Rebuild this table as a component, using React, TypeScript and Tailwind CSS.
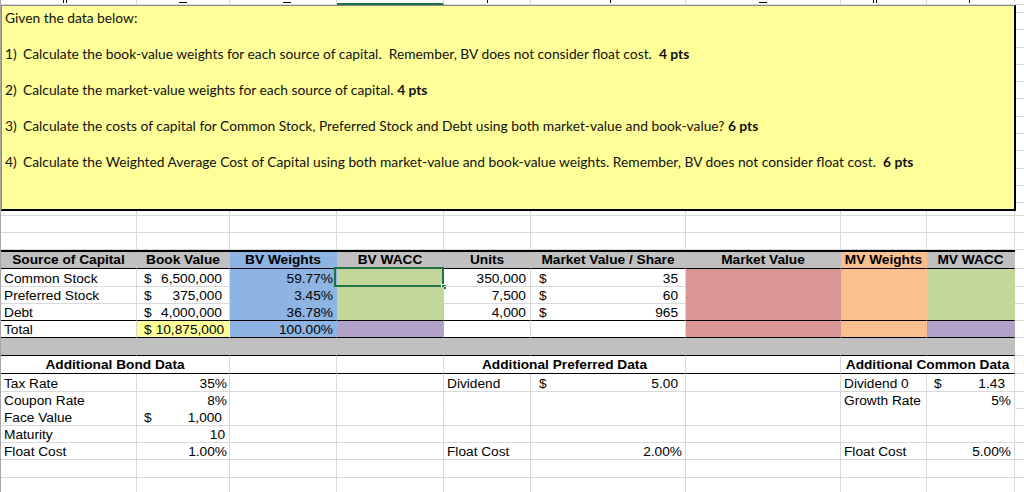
import type { ReactNode } from 'react'

// column grid A..I, widths measured from the sheet
const COLS = 'grid grid-cols-[136px_93px_107px_107px_87px_155px_155px_86px_88px]'

type Cell = { t?: ReactNode; cls?: string; fill?: string; span?: string; sel?: boolean }

const GRID = 'border-[#d9d9d9]'

function Row({
  h,
  cells,
  bottom = 'grid',
  top,
}: {
  h: string
  cells: Cell[]
  bottom?: 'grid' | 'black' | 'none'
  top?: boolean
}) {
  return (
    <div className={`flex ${h}`}>
      <div className={`${COLS} w-[1014px] ${top ? 'border-t-2 border-t-black' : ''}`}>
        {cells.map((c, i) => (
          <div
            key={i}
            className={`relative flex items-end pb-0 border-r border-b px-[3px] whitespace-nowrap ${c.fill ?? GRID} ${
              bottom === 'black' ? 'border-b-black' : bottom === 'none' ? 'border-b-transparent' : ''
            } ${c.span ?? ''} ${c.cls ?? ''}`}
          >
            {c.t}
            {c.sel && (
              <>
                <div className="absolute left-[-3px] top-[-2px] right-[-1px] bottom-[-1px] border-2 border-[#217346]" />
                <div className="absolute right-[-4px] bottom-[-4px] w-[6px] h-[6px] bg-[#217346] border border-white" />
              </>
            )}
          </div>
        ))}
      </div>
      <div className={`flex-1 border-b ${GRID}`} />
    </div>
  )
}

// accounting format: "$" hugs the left, number the right
const money = (n: string, pad = 'pl-[4px] pr-[4px]') => (
  <span className={`flex w-full justify-between gap-[4px] ${pad}`}>
    <span>$</span>
    <span>{n}</span>
  </span>
)

const BLUE = 'bg-[#8db4e2] border-[#8db4e2]'
const GREEN = 'bg-[#c4d79b] border-[#c4d79b]'
const PURPLE = 'bg-[#b1a0c7] border-[#b1a0c7]'
const RED = 'bg-[#da9694] border-[#da9694]'
const ORANGE = 'bg-[#fabf8f] border-[#fabf8f]'
const GRAY = 'bg-[#c0c0c0] border-[#c0c0c0]'
const YELLOW = 'bg-[#ffff99] border-[#ffff99]'

const blank = (n: number): Cell[] => Array.from({ length: n }, () => ({}))

const R = 'justify-end'
const C = 'justify-center font-bold pb-[1px]'
const FMV = 'pl-[5px] pr-[4px]'

export default function App() {
  return (
    <div className="w-[1024px] h-[492px] overflow-hidden bg-white text-black border-l border-[#a6a6a6] font-['Liberation_Sans',Arial,sans-serif] text-[13.7px] leading-none">
      {/* clipped row above the text box */}
      <div className="flex h-[5px]">
        <div className={`${COLS} w-[1014px]`}>
          <div className={`border-r border-b ${GRID} pl-[62px]`}><div className="w-[4px] h-[3px] border-x border-black" /></div>
          <div className={`border-r border-b ${GRID} pl-[42px] flex items-end pb-[1px]`}><div className="w-[8px] h-[1px] bg-black" /></div>
          <div className={`border-r border-b ${GRID} pl-[53px] flex items-end pb-[1px]`}><div className="w-[8px] h-[1px] bg-black" /></div>
          <div className={`border-r ${GRID} border-b-2 border-b-[#217346]`} />
          <div className={`border-r border-b ${GRID} pl-[43px]`}><div className="w-[1px] h-[3px] bg-black" /></div>
          <div className={`border-r border-b ${GRID} pl-[79px]`}><div className="w-[1px] h-[3px] bg-black" /></div>
          <div className={`border-r border-b ${GRID} pl-[73px] flex items-end pb-[1px]`}><div className="w-[8px] h-[1px] bg-black" /></div>
          <div className={`border-r border-b ${GRID} pl-[32px]`}><div className="w-[4px] h-[3px] border-x border-black" /></div>
          <div className={`border-r border-b ${GRID} pl-[42px]`}><div className="w-[1px] h-[3px] bg-black" /></div>
        </div>
        <div className={`flex-1 border-b ${GRID}`} />
      </div>

      {/* instructions text box */}
      <div className="flex h-[206px]">
        <div className="w-[1015px] bg-[#ffff99] border-t border-l border-[#8a8a8a] border-r-2 border-b-2 border-r-black border-b-black pt-[3px] pl-[3px] font-['Lato','Open_Sans',sans-serif] text-[13.8px] leading-[18px] whitespace-pre text-[#111]">
          <p className="mb-[18px]">Given the data below:</p>
          <p className="mb-[18px]">
            <span className="inline-block w-[18px]">1)</span>Calculate the book-value weights for each source of capital.  Remember, BV does not consider float cost.  <b>4 pts</b>
          </p>
          <p className="mb-[18px]">
            <span className="inline-block w-[18px]">2)</span>Calculate the market-value weights for each source of capital. <b>4 pts</b>
          </p>
          <p className="mb-[18px]">
            <span className="inline-block w-[18px]">3)</span>Calculate the costs of capital for Common Stock, Preferred Stock and Debt using both market-value and book-value? <b>6 pts</b>
          </p>
          <p>
            <span className="inline-block w-[18px]">4)</span>Calculate the Weighted Average Cost of Capital using both market-value and book-value weights. Remember, BV does not consider float cost.  <b>6 pts</b>
          </p>
        </div>
        <div className="flex-1 flex flex-col">
          {Array.from({ length: 12 }, (_, i) => (
            <div key={i} className={`h-[17.3px] border-b ${GRID} first:h-[8px]`} />
          ))}
        </div>
      </div>

      <Row h="h-[5px]" cells={blank(9)} />
      <Row h="h-[17px]" cells={blank(9)} />
      <Row h="h-[17px]" cells={blank(9)} />

      {/* capital table */}
      <Row
        h="h-[19px]"
        top
        bottom="black"
        cells={[
          { t: 'Source of Capital', cls: C, fill: GRAY },
          { t: 'Book Value', cls: C, fill: GRAY },
          { t: 'BV Weights', cls: C, fill: BLUE },
          { t: 'BV WACC', cls: C, fill: GRAY },
          { t: 'Units', cls: C, fill: GRAY },
          { t: 'Market Value / Share', cls: C, fill: GRAY },
          { t: 'Market Value', cls: C, fill: GRAY },
          { t: 'MV Weights', cls: C, fill: ORANGE },
          { t: 'MV WACC', cls: C, fill: GRAY },
        ]}
      />
      <Row
        h="h-[18px]"
        cells={[
          { t: 'Common Stock' },
          { t: money('6,500,000') },
          { t: '59.77%', cls: R, fill: BLUE },
          { fill: GREEN, sel: true },
          { t: '350,000', cls: 'justify-end pr-[4px]' },
          { t: money('35', FMV) },
          { fill: RED },
          { fill: ORANGE },
          { fill: GREEN },
        ]}
      />
      <Row
        h="h-[17px]"
        cells={[
          { t: 'Preferred Stock' },
          { t: money('375,000') },
          { t: '3.45%', cls: R, fill: BLUE },
          { fill: GREEN },
          { t: '7,500', cls: 'justify-end pr-[4px]' },
          { t: money('60', FMV) },
          { fill: RED },
          { fill: ORANGE },
          { fill: GREEN },
        ]}
      />
      <Row
        h="h-[17px]"
        bottom="black"
        cells={[
          { t: 'Debt' },
          { t: money('4,000,000') },
          { t: '36.78%', cls: R, fill: BLUE },
          { fill: GREEN },
          { t: '4,000', cls: 'justify-end pr-[4px]' },
          { t: money('965', FMV) },
          { fill: RED },
          { fill: ORANGE },
          { fill: GREEN },
        ]}
      />
      <Row
        h="h-[17px]"
        bottom="black"
        cells={[
          { t: 'Total' },
          { t: money('10,875,000'), fill: YELLOW },
          { t: '100.00%', cls: R, fill: BLUE },
          { fill: PURPLE },
          {},
          {},
          { fill: RED },
          { fill: ORANGE },
          { fill: PURPLE },
        ]}
      />
      <Row h="h-[18px]" bottom="black" cells={Array.from({ length: 9 }, () => ({ fill: GRAY }))} />

      {/* additional data */}
      <Row
        h="h-[18px]"
        bottom="black"
        cells={[
          { t: 'Additional Bond Data', cls: C, span: 'col-span-2' },
          {},
          {},
          { t: 'Additional Preferred Data', cls: C, span: 'col-span-2' },
          {},
          { t: 'Additional Common Data', cls: C, span: 'col-span-2' },
        ]}
      />
      <Row
        h="h-[18px]"
        cells={[
          { t: 'Tax Rate' },
          { t: '35%', cls: 'justify-end pr-[2px]' },
          {},
          {},
          { t: 'Dividend' },
          { t: money('5.00', FMV) },
          {},
          { t: 'Dividend 0' },
          { t: money('1.43', 'pl-[4px] pr-[6px]') },
        ]}
      />
      <Row
        h="h-[17px]"
        bottom="none"
        cells={[
          { t: 'Coupon Rate' },
          { t: '8%', cls: 'justify-end pr-[2px]' },
          {},
          {},
          {},
          {},
          {},
          { t: 'Growth Rate' },
          { t: '5%', cls: 'justify-end pr-[3px]' },
        ]}
      />
      <Row
        h="h-[17px]"
        cells={[
          { t: 'Face Value' },
          { t: money('1,000') },
          ...blank(7),
        ]}
      />
      <Row
        h="h-[17px]"
        cells={[
          { t: 'Maturity' },
          { t: '10', cls: 'justify-end pr-[4px]' },
          ...blank(7),
        ]}
      />
      <Row
        h="h-[17px]"
        cells={[
          { t: 'Float Cost' },
          { t: '1.00%', cls: 'justify-end pr-[2px]' },
          {},
          {},
          { t: 'Float Cost' },
          { t: '2.00%', cls: 'justify-end pr-[3px]' },
          {},
          { t: 'Float Cost' },
          { t: '5.00%', cls: 'justify-end pr-[3px]' },
        ]}
      />
      <Row h="h-[18px]" cells={blank(9)} />
      <Row h="h-[17px]" cells={blank(9)} />
    </div>
  )
}
